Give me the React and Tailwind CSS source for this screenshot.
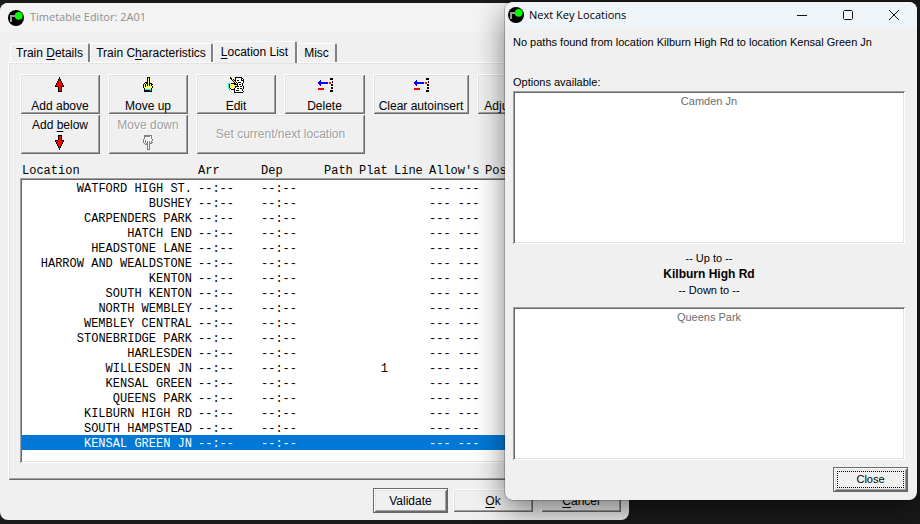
import React from "react";

const BEVEL =
  "shadow-[inset_1px_1px_0_#ffffff,inset_-1px_-1px_0_#696969,inset_2px_2px_0_#e3e3e3,inset_-2px_-2px_0_#a0a0a0]";
const SUNKEN =
  "shadow-[inset_1px_1px_0_#a0a0a0,inset_-1px_-1px_0_#ffffff,inset_2px_2px_0_#696969,inset_-2px_-2px_0_#e3e3e3]";
const COLS = "grid h-[15px] grid-cols-[176px_63px_63px_35px_35px_35px_56px_1fr]";

const stops = [
  "WATFORD HIGH ST.",
  "BUSHEY",
  "CARPENDERS PARK",
  "HATCH END",
  "HEADSTONE LANE",
  "HARROW AND WEALDSTONE",
  "KENTON",
  "SOUTH KENTON",
  "NORTH WEMBLEY",
  "WEMBLEY CENTRAL",
  "STONEBRIDGE PARK",
  "HARLESDEN",
  "WILLESDEN JN",
  "KENSAL GREEN",
  "QUEENS PARK",
  "KILBURN HIGH RD",
  "SOUTH HAMPSTEAD",
  "KENSAL GREEN JN",
].map((name) => ({ name, plat: name === "WILLESDEN JN" ? "1" : "" }));

/* Draws a small bitmap: one character per pixel, colours from a palette. */
function Pixels({ rows, palette }) {
  const w = Math.max(...rows.map((r) => r.length));
  return (
    <svg
      width={w}
      height={rows.length}
      viewBox={`0 0 ${w} ${rows.length}`}
      shapeRendering="crispEdges"
      aria-hidden="true"
      className="block shrink-0"
    >
      {rows.flatMap((row, y) =>
        [...row].map((c, x) =>
          palette[c] ? (
            <rect key={`${x}-${y}`} x={x} y={y} width="1" height="1" fill={palette[c]} />
          ) : null
        )
      )}
    </svg>
  );
}

const COLORS = { k: "#000000", y: "#ffff66", w: "#ffffff", c: "#00ffff", r: "#ff0000", b: "#0000ff" };
const GREYS = { k: "#808080", y: "#f4f4f4", w: "#ffffff", c: "#ffffff" };

const ARROW_UP = [
  "....k.....",
  "....k.....",
  "...krk....",
  "...krk....",
  "..krrrk...",
  "..krrrk...",
  ".krrrrrk..",
  ".krrrrrk..",
  "krrrrrrrk.",
  "kkkrrrkkk.",
  "...krrk...",
  "...krrk...",
  "...krrk...",
  "...krrk...",
  "...kkkk...",
];
const HAND = [
  "....kkk...",
  "....kyk...",
  "....kyk...",
  "....kyk...",
  "....kyk...",
  "..kkkyk...",
  ".kykkykkk.",
  "kykykykykk",
  "kykykykyky",
  "kykyyyyyyk",
  "kyyyyyyyyk",
  ".kyyyyyyk.",
  ".kcccccck.",
  ".kkkkkkck.",
  ".kkkkkkkk.",
];
const EDIT = [
  "..k....kkkkkkk..",
  "..kk...kwwwwwkk.",
  "...kyk.kwwwwwkwk",
  "....kykkwkkwwkkk",
  ".....kykwwwwwwwk",
  "......kykwkkkwwk",
  "cc.kkkkkykwwwwk.",
  "ckyyyykkkkwkkwk.",
  "ckyyyyyyykwwwwk.",
  "ckyyyyykkkkwkkwk",
  "ckyyyyykwwwwwwwk",
  "cckyyykwwkkwkkwk",
  ".c.kkkkwwwwwwwk.",
  "......kwkkkwwwk.",
  "......kwwwwwwwwk",
  "......kkkkkkkkk.",
];
const REMOVE = [
  "................",
  ".............kkk",
  ".............kkk",
  "...b............",
  "..bb...........k",
  ".bbbbbbbbbb.rr.k",
  ".bbbbbbbbbb.rr..",
  "..bb..........kk",
  "...b..........kk",
  "................",
  "..............kk",
  ".rrrrrr.......kk",
  ".rrrrrr.........",
  ".............kkk",
  ".............kkk",
];

const ICON_UP = <Pixels rows={ARROW_UP} palette={COLORS} />;
const ICON_DOWN = <Pixels rows={[...ARROW_UP].reverse()} palette={COLORS} />;
const ICON_HAND = <Pixels rows={HAND} palette={COLORS} />;
const ICON_HAND_DOWN = <Pixels rows={[...HAND].reverse()} palette={GREYS} />;
const ICON_EDIT = <Pixels rows={EDIT} palette={COLORS} />;
const ICON_REMOVE = <Pixels rows={REMOVE} palette={COLORS} />;

function AppIcon() {
  return (
    <svg width="16" height="16" viewBox="0 0 16 16" aria-hidden="true" className="block shrink-0">
      <circle cx="8" cy="8" r="8" fill="#000" />
      <path d="M2 12V5h5v2H4v5z" fill="#9a9a9a" />
      <circle cx="10.7" cy="5.8" r="3.9" fill="#00ff00" />
    </svg>
  );
}

function Key({ children }) {
  return <span className="underline decoration-1 underline-offset-2">{children}</span>;
}

function ToolButton({ width, icon, iconBelow, disabled, children }) {
  return (
    <button
      type="button"
      disabled={disabled}
      className={`flex h-10 shrink-0 items-center justify-between whitespace-nowrap bg-[#f0f0f0] ${BEVEL} ${width} ${
        iconBelow ? "flex-col-reverse py-1" : "flex-col pt-[3px] pb-px"
      } ${disabled ? "text-[#a0a0a0] [text-shadow:1px_1px_0_#fff]" : ""}`}
    >
      {icon}
      <span className="leading-[14px]">{children}</span>
    </button>
  );
}

function Tab({ active, width, children }) {
  return (
    <button
      type="button"
      role="tab"
      aria-selected={!!active}
      className={`whitespace-nowrap rounded-t-xs border-t border-r-2 border-l border-white border-r-[#808080] bg-[#f0f0f0] ${width} ${
        active ? "relative -mb-px h-[22px] pb-[2px]" : "h-[19px]"
      }`}
    >
      {children}
    </button>
  );
}

function TimetableEditor() {
  return (
    <section className="absolute top-[3px] right-[291px] left-0 overflow-hidden rounded-lg bg-[#f0f0f0] pb-[7px]">
      <header className="flex h-[29px] items-center gap-[6px] bg-[#f3f3f3] pl-2 font-['Open_Sans',sans-serif] text-[11px] text-[#8f8f8f]">
        <AppIcon />
        <h1>Timetable Editor: 2A01</h1>
      </header>

      <div className="px-2 pt-[9px]">
        <div role="tablist" className="flex items-end pl-[2px]">
          <Tab width="w-[80px]">
            Train <Key>D</Key>etails
          </Tab>
          <Tab width="w-[123px]">
            Train C<Key>h</Key>aracteristics
          </Tab>
          <Tab active width="w-[84px]">
            <Key>L</Key>ocation List
          </Tab>
          <Tab width="w-[40px]">Misc</Tab>
        </div>

        <div className={`px-3 pt-3 pb-[17px] ${BEVEL}`}>
          <div className="flex gap-2">
            <ToolButton width="w-20" icon={ICON_UP}>Add above</ToolButton>
            <ToolButton width="w-20" icon={ICON_HAND}>Move up</ToolButton>
            <ToolButton width="w-20" icon={ICON_EDIT}>Edit</ToolButton>
            <ToolButton width="w-[81px]" icon={ICON_REMOVE}>Delete</ToolButton>
            <ToolButton width="w-24" icon={ICON_REMOVE}>Clear autoinsert</ToolButton>
            <ToolButton width="w-20" icon={ICON_EDIT}>Adjust times</ToolButton>
          </div>
          <div className="flex gap-2">
            <ToolButton width="w-20" icon={ICON_DOWN} iconBelow>
              Add <Key>b</Key>elow
            </ToolButton>
            <ToolButton width="w-20" icon={ICON_HAND_DOWN} iconBelow disabled>
              Move down
            </ToolButton>
            <button
              type="button"
              disabled
              className={`h-10 w-[169px] bg-[#f0f0f0] text-[#a0a0a0] [text-shadow:1px_1px_0_#fff] ${BEVEL}`}
            >
              Set current/next location
            </button>
          </div>

          <table className="mt-[9px] block overflow-hidden whitespace-nowrap font-['Liberation_Mono',monospace] text-[12px]">
            <thead className="block">
              <tr className={`${COLS} pl-[2px] leading-[17px]`}>
                {["Location", "Arr", "Dep", "Path", "Plat", "Line", "Allow's", "Pos"].map((h) => (
                  <th key={h} scope="col" className="text-left font-normal">
                    {h}
                  </th>
                ))}
              </tr>
            </thead>
            <tbody className={`block bg-white px-[2px] pt-[2px] pb-[13px] ${SUNKEN}`}>
              {stops.map((s, i) => (
                <tr
                  key={s.name}
                  className={`${COLS} leading-[18px] ${i === stops.length - 1 ? "bg-[#0078d7] text-white" : ""}`}
                >
                  <td className="pr-[6px] text-right">{s.name}</td>
                  <td>--:--</td>
                  <td>--:--</td>
                  <td />
                  <td className="pr-[6px] text-right">{s.plat}</td>
                  <td />
                  <td>--- ---</td>
                  <td />
                </tr>
              ))}
            </tbody>
          </table>
        </div>

        <div className="flex items-center justify-end gap-2 pt-2">
          <button type="button" className={`-mr-[3px] h-[25px] w-[75px] border border-[#696969] ${BEVEL}`}>
            Validate
          </button>
          <button type="button" className={`h-[23px] w-20 ${BEVEL}`}>
            <Key>O</Key>k
          </button>
          <button type="button" className={`h-[23px] w-20 ${BEVEL}`}>
            <Key>C</Key>ancel
          </button>
        </div>
      </div>
    </section>
  );
}

function OptionList({ label, items }) {
  return (
    <ul
      role="listbox"
      aria-label={label}
      className={`mr-[3px] h-[153px] bg-white pt-[3px] text-center leading-[15px] text-[#6d6d6d] ${SUNKEN}`}
    >
      {items.map((item) => (
        <li key={item} role="option" aria-selected="false">
          {item}
        </li>
      ))}
    </ul>
  );
}

function KeyLocations() {
  return (
    <section className="absolute top-[2px] right-[3px] left-[505px] overflow-hidden rounded-lg bg-[#f0f0f0] text-[11px] shadow-[0_10px_30px_rgba(0,0,0,0.5),0_0_0_1px_rgba(0,0,0,0.2)]">
      <header className="flex h-[25px] items-center bg-[#eef4f7] pl-[3px] font-['Open_Sans',sans-serif]">
        <AppIcon />
        <h2 className="flex-1 pt-[2px] pl-[5px]">Next Key Locations</h2>
        <div className="flex gap-[22px] pr-[11px]">
          {[
            ["Minimise", "M7 12.5H17"],
            ["Maximise", "M8.5 7.5h7l1 1v7l-1 1h-7l-1-1v-7z"],
            ["Close window", "M7 7L17 17M17 7L7 17"],
          ].map(([name, d]) => (
            <button key={name} type="button" aria-label={name}>
              <svg width="24" height="24" viewBox="0 0 24 24" fill="none" stroke="#111" className="block">
                <path d={d} />
              </svg>
            </button>
          ))}
        </div>
      </header>
      <div className="px-2 pt-2 pr-[9px] pb-2">
        <p className="leading-[14px]">
          No paths found from location Kilburn High Rd to location Kensal Green Jn
        </p>
        <p className="pt-[26px] pb-[2px] leading-[14px]">Options available:</p>
        <OptionList label="Options up" items={["Camden Jn"]} />
        <div className="mr-[3px] pt-[6px] pb-[9px] text-center leading-4">
          <p>-- Up to --</p>
          <p className="text-[12px] leading-4 font-bold">Kilburn High Rd</p>
          <p>-- Down to --</p>
        </div>
        <OptionList label="Options down" items={["Queens Park"]} />
        <div className="flex justify-end pt-[7px]">
          <button type="button" className={`h-[25px] w-[75px] border border-[#696969] p-[3px] ${BEVEL}`}>
            <span className="flex h-full items-center justify-center border border-dotted border-black">
              Close
            </span>
          </button>
        </div>
      </div>
    </section>
  );
}

export default function App() {
  return (
    <main className="relative h-screen w-full overflow-hidden bg-[#1b1a1a] font-['Liberation_Sans',Arial,sans-serif] text-[12px] text-black">
      <TimetableEditor />
      <KeyLocations />
    </main>
  );
}
